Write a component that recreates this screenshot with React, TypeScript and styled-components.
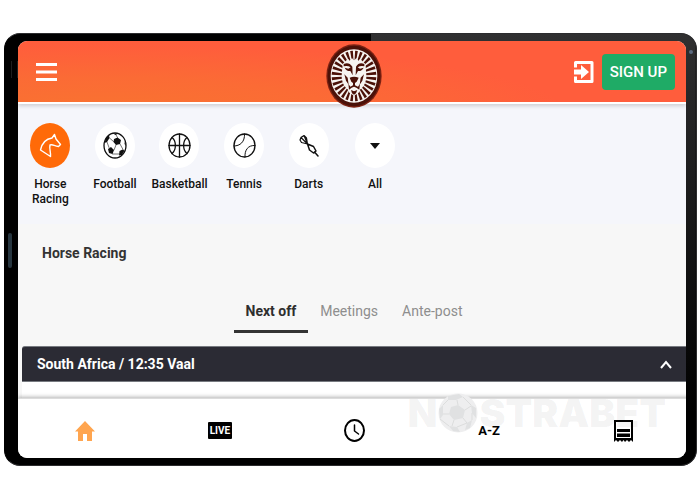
import React from 'react';
import styled, { createGlobalStyle } from 'styled-components';

const GlobalStyle = createGlobalStyle`
  *, *::before, *::after { box-sizing: border-box; }
  body {
    margin: 0;
    background: #fff;
    color: #111;
    font-family: Roboto, "Liberation Sans", sans-serif;
  }
  button { font-family: inherit; border: 0; background: none; padding: 0; cursor: pointer; }
  a { color: inherit; text-decoration: none; }
  svg { display: block; }
`;

const Page = styled.div`
  padding: 33px 3px 28px 4px;
`;

const Tablet = styled.div`
  position: relative;
  padding: 7px 10px 7px 13px;
  border: 1px solid #2c2c2e;
  border-left-color: #000;
  border-radius: 16px;
  background:
    linear-gradient(to bottom, #303031, #262627 15%, #000 88%) right top / 47% 100% no-repeat,
    #000;
`;

const SideButton = styled.span`
  position: absolute;
  left: 3px;
  top: 199px;
  width: 4px;
  height: 35px;
  border-radius: 2px;
  background: #273640;
`;

const Speaker = styled.span`
  position: absolute;
  left: 6px;
  top: 27px;
  width: 7px;
  height: 17px;
  border: solid #1e1e1e;
  border-width: 0 1px;
`;

const Camera = styled.span`
  position: absolute;
  right: 3px;
  top: 16px;
  width: 4px;
  height: 4px;
  border-radius: 50%;
  background: #5b6a80;
`;

const Screen = styled.div`
  position: relative;
  overflow: hidden;
  border-radius: 9px;
  background: #f7f7f7;
`;

const Header = styled.header`
  position: relative;
  z-index: 1;
  display: flex;
  align-items: center;
  height: 63px;
  padding: 0 11px 0 18px;
  border-bottom: 2px solid #fff;
  background: radial-gradient(ellipse 70% 110% at 12% 115%, #f97330, #fb6b35 50%, #ff5d3c) padding-box;
  box-shadow: 0 2px 4px rgba(0, 0, 0, 0.16);
`;

const IconButton = styled.button`
  display: flex;
  color: #fff;
`;

const HeaderActions = styled.div`
  display: flex;
  align-items: center;
  gap: 8px;
  margin-left: auto;
`;

const SignUp = styled.button`
  height: 36px;
  padding: 0 8px;
  border-radius: 4px;
  background: #1fab66;
  color: #fff;
  font-size: 15px;
  font-weight: 500;
`;

const Brand = styled.a`
  position: absolute;
  top: 3px;
  left: calc(50% - 26px);
`;

const Sports = styled.nav`
  display: grid;
  grid-template-columns: repeat(5, 1fr) 68px;
  max-width: 391px;
  padding: 19px 0 17px;
`;

const SportsBand = styled.div`
  background: #f5f6fb;
`;

const Sport = styled.a`
  display: flex;
  flex-direction: column;
  align-items: center;
  gap: 9px;
  font-size: 12px;
  line-height: 15px;
  font-weight: 500;
  text-align: center;
`;

const Disc = styled.span<{ $active?: boolean }>`
  display: flex;
  align-items: center;
  justify-content: center;
  width: 40px;
  height: 45px;
  border-radius: 50%;
  background: ${(p) => (p.$active ? '#ff6a08' : '#fff')};
  color: ${(p) => (p.$active ? '#fff' : '#111')};
`;

const SportLabel = styled.span<{ $narrow?: boolean }>`
  max-width: ${(p) => (p.$narrow ? '44px' : 'none')};
`;

const Title = styled.h1`
  margin: 0;
  padding: 19px 24px 0;
  font-size: 14px;
  line-height: 20px;
  font-weight: 700;
  color: #333;
`;

const Tabs = styled.div`
  display: flex;
  justify-content: center;
  padding: 38px 0 13px 4px;
`;

const Tab = styled.button<{ $active?: boolean }>`
  padding: 0 12px 9px;
  border-bottom: 3px solid ${(p) => (p.$active ? '#333' : 'transparent')};
  color: ${(p) => (p.$active ? '#2f2f2f' : '#8e8e8e')};
  font-size: 14px;
  line-height: 20px;
  font-weight: ${(p) => (p.$active ? 700 : 400)};
`;

const Race = styled.section`
  margin-left: 4px;
  padding-bottom: 16px;
  background: #fff;
  border-top-left-radius: 3px;
`;

const RaceBar = styled.button`
  display: flex;
  align-items: center;
  justify-content: space-between;
  width: 100%;
  height: 36px;
  padding: 0 14px 0 15px;
  border: solid #777a80;
  border-width: 1px 0;
  border-top-left-radius: 3px;
  background: #2b2b34;
  color: #fff;
  font-size: 14px;
  font-weight: 700;
`;

const BottomBar = styled.nav`
  position: relative;
  display: grid;
  grid-template-columns: repeat(5, 1fr);
  height: 60px;
  margin-right: -5px;
  padding-top: 4px;
  border-top: 1px solid #dcdcdc;
  background: #fff;
  box-shadow: 0 -1px 4px rgba(0, 0, 0, 0.3);
`;

const BottomLink = styled.a<{ $active?: boolean }>`
  position: relative;
  display: flex;
  align-items: center;
  justify-content: center;
  color: ${(p) => (p.$active ? '#ffa54f' : '#000')};
`;

const LiveBadge = styled.span`
  padding: 0 2px;
  border-radius: 1px;
  background: #000;
  color: #fff;
  font-size: 10px;
  line-height: 17px;
  font-weight: 700;
`;

const AToZ = styled.span`
  font-size: 13px;
  font-weight: 700;
`;

const Watermark = styled.div`
  position: absolute;
  right: 25px;
  bottom: 25px;
  display: flex;
  align-items: center;
  gap: 1px;
  color: rgba(90, 90, 90, 0.07);
  font-family: Inter, sans-serif;
  font-size: 39px;
  line-height: 40px;
  font-weight: 900;
  pointer-events: none;
`;

const stroke = {
  fill: 'none',
  stroke: 'currentColor',
  strokeLinecap: 'round' as const,
  strokeLinejoin: 'round' as const,
};

const RAY_COUNT = 28;

const maneRays = Array.from({ length: RAY_COUNT }, (_, i) => {
  const a = ((i + 0.5) / RAY_COUNT) * Math.PI * 2;
  const point = (offset: number, rx: number, ry: number) =>
    `${(164 + Math.cos(a + offset) * rx).toFixed(1)},${(152 + Math.sin(a + offset) * ry).toFixed(1)}`;
  return [point(-0.06, 67, 76), point(0.06, 67, 76), point(0.07, 37, 47), point(-0.07, 37, 47)].join(' ');
});

const LionLogo = () => (
  <svg width="56" height="64" viewBox="80 56 168 192" aria-hidden="true">
    <ellipse cx="164" cy="152" rx="83" ry="95" fill="#7b2112" />
    <ellipse cx="164" cy="152" rx="79" ry="91" fill="#4b1108" />
    <ellipse cx="164" cy="152" rx="70" ry="80" fill="#f7f4f1" />
    <g fill="#4b1108">
      {maneRays.map((points) => (
        <polygon key={points} points={points} />
      ))}
    </g>
    <path
      d="M130 116 L140 106 L146 100 L151 106 L158 98 L164 106 L171 98 L177 106 L183 100 L188 106 L199 117 L200 143 L192 164 L186 182 L178 202 L164 211 L150 202 L142 182 L136 164 L128 143 Z"
      fill="#f7f4f1"
    />
    <g fill="#4b1108">
      <path d="M133 116 Q149 109 159 124 L160 150 L153 137 Q141 138 136 127 L147 130 L154 126 Q145 120 133 123 Z" />
      <path d="M195 116 Q179 109 170 124 L169 150 L176 137 Q187 138 193 127 L182 130 L175 126 Q184 120 195 123 Z" />
      <path d="M151 157 Q164 152 178 157 L172 169 L167 173 L167 180 L176 184 L182 175 L180 193 L171 187 L164 184 L157 187 L149 193 L147 175 L153 184 L161 180 L161 173 L156 169 Z" />
      <path d="M155 194 L164 198 L174 194 L170 204 L164 208 L158 204 Z" />
      <path d="M135 147 L145 157 L148 178 L140 166 Z M194 147 L184 157 L181 178 L189 166 Z" />
    </g>
  </svg>
);

const MenuIcon = () => (
  <svg width="21" height="20" viewBox="0 0 21 20" aria-hidden="true">
    <path d="M0 2.5H21M0 10H21M0 17.5H21" stroke="currentColor" strokeWidth="3" />
  </svg>
);

const LoginIcon = () => (
  <svg width="21" height="24" viewBox="0 0 21 24" aria-hidden="true">
    <path d="M2.500 7.500V2.500H19V21.500H2.500V16.500" fill="none" stroke="currentColor" strokeWidth="3" strokeLinejoin="round" />
    <path d="M1 9.500H8V5L16 12L8 19V14.500H1Z" fill="currentColor" />
  </svg>
);

const HorseIcon = () => (
  <svg width="23" height="25" viewBox="0 0 23 25" aria-hidden="true" {...stroke} strokeWidth="1.400">
    <path d="M15.500 1.500 L13 5 C6 6 3 10 1.500 17 L11.500 23.500 C12 19 10 16 11 12 C14 11 15 13 19.500 13.500 L21.500 11.500 L17 6 Z" />
  </svg>
);

const FootballIcon = () => (
  <svg width="24" height="27" viewBox="0 0 24 27" aria-hidden="true">
    <ellipse cx="12" cy="13.500" rx="11" ry="12.500" fill="#fff" stroke="#111" strokeWidth="1.300" />
    <path
      d="M11 7 L14.500 5.500 L18 8 L17 12 L13 13 L10.500 10 Z M5 17 L8 15 L11 18 L9.500 22 L6 21 Z M16.500 19 L19.500 17.500 L21.500 18.500 L19 23 L16 23.500 Z M1.500 11 L3 5.500 L6 3.500 L6.500 6 L4 10 Z M10 1.500 L15 1.500 L12.500 3 Z M22 8 L23 14 L21.500 12 Z"
      fill="#111"
    />
    <path
      d="M6.500 6 L10.500 9.500 M4 10 L6 15.500 M13 13 L11 18 M17 12 L20 17.500 M9.500 22 L16 22 M14.500 5.500 L12.500 2"
      {...stroke}
      strokeWidth="0.600"
    />
  </svg>
);

const BasketballIcon = () => (
  <svg width="23" height="25" viewBox="0 0 23 25" aria-hidden="true" {...stroke} strokeWidth="1.300">
    <ellipse cx="11.500" cy="12.500" rx="10.500" ry="11.500" />
    <path d="M11.500 1V24M1 12.500H22M4 4.500C8.500 8 8.500 17 4 20.500M19 4.500C14.500 8 14.500 17 19 20.500" />
  </svg>
);

const TennisIcon = () => (
  <svg width="23" height="25" viewBox="0 0 23 25" aria-hidden="true" {...stroke} strokeWidth="1.400">
    <ellipse cx="11.500" cy="12.500" rx="10.500" ry="11.500" />
    <path d="M11.500 1C12 9 7 13 1 13M22 12.500C15 12 11.500 17 12 24" strokeWidth="1" />
  </svg>
);

const DartIcon = () => (
  <svg width="20" height="23" viewBox="0 0 20 23" aria-hidden="true" {...stroke} strokeWidth="1.200">
    <path d="M1 6 L2 3.500 L5 1.500 L7.500 4 L8.500 10 L2.500 8.500 Z M2 3.500 L8.500 10 L5 1.500" />
    <path d="M8.500 10 L10.500 16 L14.500 19 L17 17 L14.500 12.500 Z M15.500 18 L19 22" strokeWidth="1.500" />
  </svg>
);

const CaretIcon = () => (
  <svg width="10" height="6" viewBox="0 0 10 6" aria-hidden="true">
    <path d="M0 0H10L5 6Z" fill="currentColor" />
  </svg>
);

const ChevronUp = () => (
  <svg width="12" height="9" viewBox="0 0 12 9" aria-hidden="true">
    <path d="M1 8L6 2L11 8" fill="none" stroke="currentColor" strokeWidth="2" />
  </svg>
);

const HomeIcon = () => (
  <svg width="20" height="20" viewBox="0 0 20 20" aria-hidden="true">
    <path d="M10 0L20 10.500H17V20H12V13H8V20H3V10.500H0Z" fill="currentColor" />
  </svg>
);

const ClockIcon = () => (
  <svg width="21" height="23" viewBox="0 0 21 23" aria-hidden="true" {...stroke} strokeWidth="2">
    <ellipse cx="10.500" cy="11.500" rx="9.500" ry="10.500" />
    <path d="M10.500 6V12L14.500 15" strokeWidth="1.500" />
  </svg>
);

const BetslipIcon = () => (
  <svg width="19" height="22" viewBox="0 0 19 22" aria-hidden="true">
    <path
      d="M0 0H19V22L17 20L15 22L13 20L11 22L9.500 20L8 22L6 20L4 22L2 20L0 22ZM2 2V18H17V2Z"
      fillRule="evenodd"
      fill="currentColor"
    />
    <path d="M3 9H16V12H3ZM3 13.500H16V17H3Z" fill="currentColor" />
  </svg>
);

const WatermarkBall = () => (
  <svg width="40" height="40" viewBox="0 0 40 40" aria-hidden="true">
    <circle cx="20" cy="20" r="19.500" fill="#eeeeef" />
    <path
      d="M13 14L20 12L27 17L25 25L16 27L11 21Z M10 3L21 1L25 4L18 7L10 7Z M1 16L5 12L5 22L2 26Z M33 12L38 15L38 25L34 20Z M11 33L19 34L22 39L15 38Z M29 30L34 27L32 35L27 37Z"
      fill="#e0e1e2"
    />
    <path
      d="M20 12L19 7M27 17L33 13M25 25L29 30M16 27L14 33M11 21L5 21M10 7L5 12M25 4L33 12M34 27V20M19 34L29 30M2 26L11 33"
      fill="none"
      stroke="#dcdddd"
    />
  </svg>
);

const sports = [
  { name: 'Horse Racing', Icon: HorseIcon, active: true },
  { name: 'Football', Icon: FootballIcon },
  { name: 'Basketball', Icon: BasketballIcon },
  { name: 'Tennis', Icon: TennisIcon },
  { name: 'Darts', Icon: DartIcon },
  { name: 'All', Icon: CaretIcon },
];

export default function App() {
  return (
    <Page>
      <GlobalStyle />
      <Tablet>
        <Speaker />
        <SideButton />
        <Camera />
        <Screen>
          <Header>
            <IconButton aria-label="Menu">
              <MenuIcon />
            </IconButton>
            <Brand href="#home" aria-label="Home page">
              <LionLogo />
            </Brand>
            <HeaderActions>
              <IconButton aria-label="Log in">
                <LoginIcon />
              </IconButton>
              <SignUp>SIGN UP</SignUp>
            </HeaderActions>
          </Header>

          <SportsBand>
            <Sports aria-label="Sports">
              {sports.map(({ name, Icon, active }) => (
                <Sport key={name} href="#sport">
                  <Disc $active={active}>
                    <Icon />
                  </Disc>
                  <SportLabel $narrow={active}>{name}</SportLabel>
                </Sport>
              ))}
            </Sports>
          </SportsBand>

          <main>
            <Title>Horse Racing</Title>
            <Tabs role="tablist">
              <Tab role="tab" aria-selected="true" $active>
                Next off
              </Tab>
              <Tab role="tab" aria-selected="false">Meetings</Tab>
              <Tab role="tab" aria-selected="false">Ante-post</Tab>
            </Tabs>
            <Race>
              <RaceBar aria-expanded="true">
                South Africa / 12:35 Vaal
                <ChevronUp />
              </RaceBar>
            </Race>
          </main>

          <BottomBar aria-label="Main">
            <Watermark aria-hidden="true">
              <span>N</span>
              <WatermarkBall />
              <span>STRABET</span>
            </Watermark>
            <BottomLink href="#home" aria-label="Home" $active>
              <HomeIcon />
            </BottomLink>
            <BottomLink href="#live">
              <LiveBadge>LIVE</LiveBadge>
            </BottomLink>
            <BottomLink href="#soon" aria-label="Starting soon">
              <ClockIcon />
            </BottomLink>
            <BottomLink href="#a-z">
              <AToZ>A-Z</AToZ>
            </BottomLink>
            <BottomLink href="#betslip" aria-label="Bet slip">
              <BetslipIcon />
            </BottomLink>
          </BottomBar>
        </Screen>
      </Tablet>
    </Page>
  );
}
